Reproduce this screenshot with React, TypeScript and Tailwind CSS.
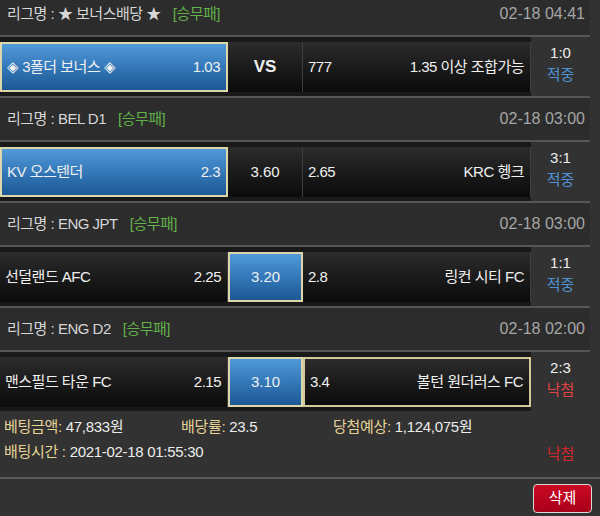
import React from 'react';

type Match = {
    league: string;
    date: string;
    home: string;
    homeOdds: string;
    draw: string;
    awayOdds: string;
    away: string;
    score: string;
    result: '적중' | '낙첨';
    pick: 'home' | 'draw';
    outlineAway?: boolean;
};

const MATCHES: Match[] = [
    { league: '★ 보너스배당 ★', date: '02-18 04:41', home: '◈ 3폴더 보너스 ◈', homeOdds: '1.03', draw: 'VS', awayOdds: '777', away: '1.35 이상 조합가능', score: '1:0', result: '적중', pick: 'home' },
    { league: 'BEL D1', date: '02-18 03:00', home: 'KV 오스텐더', homeOdds: '2.3', draw: '3.60', awayOdds: '2.65', away: 'KRC 헹크', score: '3:1', result: '적중', pick: 'home' },
    { league: 'ENG JPT', date: '02-18 03:00', home: '선덜랜드 AFC', homeOdds: '2.25', draw: '3.20', awayOdds: '2.8', away: '링컨 시티 FC', score: '1:1', result: '적중', pick: 'draw' },
    { league: 'ENG D2', date: '02-18 02:00', home: '맨스필드 타운 FC', homeOdds: '2.15', draw: '3.10', awayOdds: '3.4', away: '볼턴 원더러스 FC', score: '2:3', result: '낙첨', pick: 'draw', outlineAway: true },
];

const FONT = { fontFamily: '"Liberation Sans", "Noto Sans CJK KR", sans-serif' };

// cell skin: picked = blue with cream frame, outlined = dark with cream frame
const cellClass = (picked: boolean, outlined = false) => {
    if (picked) return 'bg-linear-to-b from-[#519ad9] via-[#3478b9] to-[#1c5894] border-2 border-[#dcd6a8]';
    if (outlined) return 'bg-linear-to-b from-[#2c2c2c] to-[#0b0b0b] border-2 border-[#d2c99a]';
    return 'bg-linear-to-b from-[#2c2c2c] to-[#0b0b0b] border-r border-[#3e3e3e]';
};

const MatchBlock = ({ m, last }: { m: Match; last: boolean }) => (
    <div className="w-[590px]">
        <div className="h-[44px] bg-[#2c2c2c] flex items-center justify-between pl-[7px] pr-[5px] border-b-2 border-[#565656]">
            <div className="text-[15px] tracking-[-0.5px] text-[#d6d6d6] flex items-center gap-[12px]">
                <span>리그명 : {m.league}</span>
                <span className="text-[#62b24a]">[승무패]</span>
            </div>
            <span className="text-[16px] text-[#a6a6a6]">{m.date}</span>
        </div>

        <div className={`flex ${last ? '' : 'border-b-2 border-[#565656]'}`}>
            <div className="flex bg-[#191919] pt-[5px] pb-[4px]">
                <div className={`w-[228px] h-[50px] flex items-center justify-between pl-[5px] pr-[6px] text-[15px] tracking-[-0.5px] text-[#f0f0f0] ${cellClass(m.pick === 'home')}`}>
                    <span>{m.home}</span>
                    <span>{m.homeOdds}</span>
                </div>
                <div className={`w-[75px] h-[50px] flex items-center justify-center text-[#f0f0f0] ${cellClass(m.pick === 'draw')} ${m.draw === 'VS' ? 'text-[17px] font-bold' : 'text-[15px]'}`}>
                    {m.draw}
                </div>
                <div className={`w-[228px] h-[50px] flex items-center justify-between pl-[5px] pr-[6px] text-[15px] tracking-[-0.5px] text-[#f0f0f0] ${cellClass(false, m.outlineAway)}`}>
                    <span>{m.awayOdds}</span>
                    <span>{m.away}</span>
                </div>
            </div>
            <div className="w-[59px] flex flex-col items-center justify-center pb-[6px] text-[15px] leading-[22px]">
                <span className="text-[#eeeeee]">{m.score}</span>
                <span className={m.result === '적중' ? 'text-[#4f93d4]' : 'text-[#e04444]'}>{m.result}</span>
            </div>
        </div>
    </div>
);

export default function App() {
    return (
        <div className="w-[600px] h-[516px] overflow-hidden bg-[#323232]" style={FONT}>
            <div className="-mt-[7px]">
                {MATCHES.map((m, i) => (
                    <MatchBlock key={i} m={m} last={i === MATCHES.length - 1} />
                ))}
            </div>

            {/* bet summary */}
            <div className="pt-[3px] pl-[4px] text-[15px] tracking-[-0.3px] leading-[25px]">
                <div className="flex">
                    <div className="w-[177px]"><span className="text-[#e6d497]">베팅금액:</span> <span className="text-[#ececec]">47,833원</span></div>
                    <div className="w-[152px]"><span className="text-[#e6d497]">배당률:</span> <span className="text-[#ececec]">23.5</span></div>
                    <div><span className="text-[#e6d497]">당첨예상:</span> <span className="text-[#ececec]">1,124,075원</span></div>
                </div>
                <div className="flex">
                    <div className="w-[527px]"><span className="text-[#e6d497]">배팅시간 :</span> <span className="text-[#ececec]">2021-02-18 01:55:30</span></div>
                    <div className="w-[59px] text-center text-[#d8262b] pt-[2px]">낙첨</div>
                </div>
            </div>

            <div className="mt-[11px] border-t-2 border-[#5a5a5a] flex justify-end pt-[5px] pr-[8px]">
                <button className="w-[59px] h-[29px] rounded-[4px] border border-[#d8d8d8] bg-linear-to-b from-[#cc0a24] to-[#a8001a] text-white text-[15px] flex items-center justify-center">
                    삭제
                </button>
            </div>
        </div>
    );
}
